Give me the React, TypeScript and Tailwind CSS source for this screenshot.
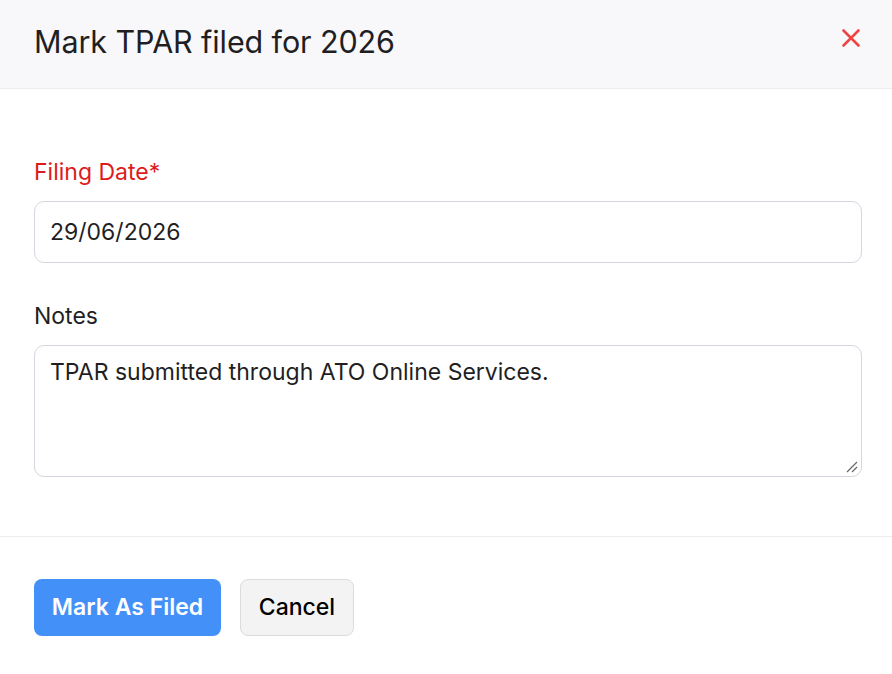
import React from "react";

export default function App() {
  return (
    <div className="w-[892px] h-[674px] bg-white overflow-hidden" style={{ fontFamily: "Inter, 'Noto Sans', sans-serif" }}>
      <div className="h-[89px] bg-[#f8f8fa] border-b border-[#ececef] flex items-center justify-between pl-[34px] pr-[31px]">
        <h1 className="text-[30.5px] leading-[36px] text-[#1f1f23] font-normal tracking-[-0.1px] mt-[-4px]">Mark TPAR filed for 2026</h1>
        <svg width="20" height="20" viewBox="0 0 20 20" className="mt-[-13px]">
          <path d="M2.5 2.5 L17.5 17.5 M17.5 2.5 L2.5 17.5" stroke="#ef4444" strokeWidth="2.6" strokeLinecap="round" />
        </svg>
      </div>
      <div className="pl-[34px] pr-[30px] pt-[69px] pb-[59px] border-b border-[#ececef]">
        <label className="block text-[23px] text-[#dc1c1c] leading-[28px]">Filing Date*</label>
        <div className="mt-[15px] h-[62px] rounded-[10px] border border-[#d6d6de] flex items-center px-[15px] text-[23px] leading-[28px] text-[#1f1f23]">
          29/06/2026
        </div>
        <label className="block mt-[39px] text-[23px] text-[#1f1f23] leading-[28px]">Notes</label>
        <div className="relative mt-[15px] h-[132px] rounded-[10px] border border-[#d6d6de] px-[15px] pt-[12px] text-[23px] leading-[28px] text-[#1f1f23]">
          TPAR submitted through ATO Online Services.
          <svg width="12" height="12" viewBox="0 0 12 12" className="absolute right-[3px] bottom-[3px]">
            <path d="M1 11 L11 1 M6 11 L11 6" stroke="#666" strokeWidth="1.2" />
          </svg>
        </div>
      </div>
      <div className="px-[34px] pt-[42px] flex gap-[19px]">
        <button className="h-[57px] w-[187px] rounded-[8px] bg-[#4390f8] text-white text-[23px] font-semibold flex items-center justify-center">Mark As Filed</button>
        <button className="h-[57px] w-[114px] rounded-[8px] bg-[#f3f3f3] border border-[#dcdcdc] text-black text-[23px] font-medium flex items-center justify-center">Cancel</button>
      </div>
    </div>
  );
}
